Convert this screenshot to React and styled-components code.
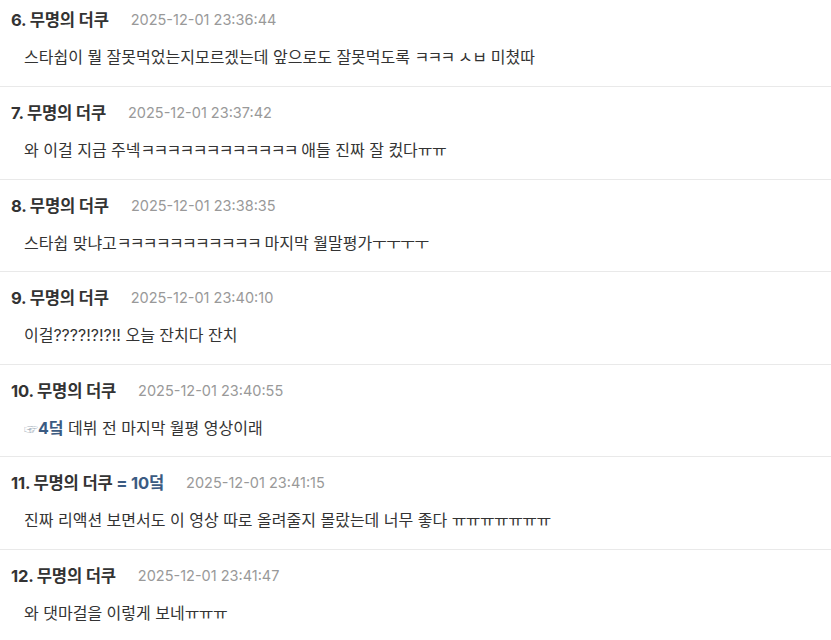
import React from "react";
import styled, { createGlobalStyle } from "styled-components";

const Global = createGlobalStyle`
  html, body { margin: 0; padding: 0; background: #fff; }
  body {
    font-family: Inter, "Noto Sans CJK KR", "Noto Sans", sans-serif;
    -webkit-font-smoothing: antialiased;
  }
`;

const List = styled.ul`
  list-style: none;
  margin: -6px 0 0 0;
  padding: 0;
  overflow: hidden;
`;

const Item = styled.li`
  border-bottom: 1px solid #e9e9e9;
  padding: 15px 0 0 11px;
  height: 93px;
  box-sizing: border-box;
  display: flex;
  flex-direction: column;
  gap: 17px;
  &:nth-child(n + 3):nth-child(odd) {
    height: 92px;
  }
`;

const Header = styled.div`
  display: flex;
  align-items: center;
  gap: 22px;
  height: 20px;
`;

const Name = styled.span`
  font-weight: 700;
  font-size: 16.6px;
  color: #333;
  letter-spacing: -0.2px;
`;

const Highlight = styled.span`
  color: #3b5b82;
  font-weight: 700;
`;

const DateText = styled.span`
  font-size: 14.5px;
  color: #999;
`;

const Body = styled.div`
  padding-left: 13px;
  font-size: 16px;
  line-height: 22px;
  color: #333;
`;

const Jamo = styled.span`
  letter-spacing: ${(p) => (p.$tight ? "-1.7px" : "-0.6px")};
`;

const Pointer = styled.span`
  color: #aab4c0;
  font-size: 14px;
`;

function withJamo(text) {
  return text.split(/([ㄱ-ㅣ]+)/).map((part, i) =>
    /^[ㄱ-ㅣ]+$/.test(part) ? (
      <Jamo key={i} $tight={/ㅋ/.test(part)}>
        {part}
      </Jamo>
    ) : (
      part
    )
  );
}

const comments = [
  { n: 6, date: "2025-12-01 23:36:44", body: "스타쉽이 뭘 잘못먹었는지모르겠는데 앞으로도 잘못먹도록 ㅋㅋㅋ ㅅㅂ 미쳤따" },
  { n: 7, date: "2025-12-01 23:37:42", body: "와 이걸 지금 주넥ㅋㅋㅋㅋㅋㅋㅋㅋㅋㅋㅋㅋ 애들 진짜 잘 컸다ㅠㅠ" },
  { n: 8, date: "2025-12-01 23:38:35", body: "스타쉽 맞냐고ㅋㅋㅋㅋㅋㅋㅋㅋㅋㅋㅋ 마지막 월말평가ㅜㅜㅜㅜ" },
  { n: 9, date: "2025-12-01 23:40:10", body: "이걸????!?!?!! 오늘 잔치다 잔치" },
  {
    n: 10,
    date: "2025-12-01 23:40:55",
    body: (
      <>
        <Pointer>☞</Pointer>
        <Highlight>4덬</Highlight> 데뷔 전 마지막 월평 영상이래
      </>
    ),
  },
  { n: 11, date: "2025-12-01 23:41:15", tag: "= 10덬", body: "진짜 리액션 보면서도 이 영상 따로 올려줄지 몰랐는데 너무 좋다 ㅠㅠㅠㅠㅠㅠㅠ" },
  { n: 12, date: "2025-12-01 23:41:47", body: "와 댓마걸을 이렇게 보네ㅠㅠㅠ" },
];

export default function App() {
  return (
    <>
      <Global />
      <List>
        {comments.map((c) => (
          <Item key={c.n}>
            <Header>
              <Name>
                {c.n}. 무명의 더쿠
                {c.tag && <Highlight> {c.tag}</Highlight>}
              </Name>
              <DateText>{c.date}</DateText>
            </Header>
            <Body>{typeof c.body === "string" ? withJamo(c.body) : c.body}</Body>
          </Item>
        ))}
      </List>
    </>
  );
}
